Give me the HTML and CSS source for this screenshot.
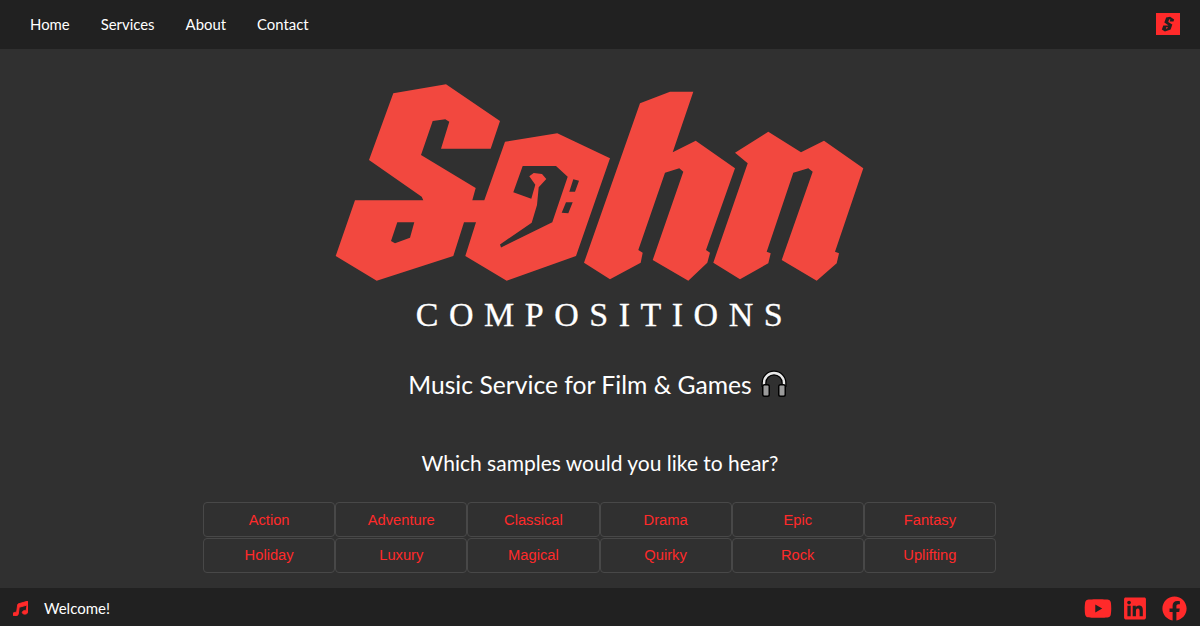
FILE: index.html
```html
<!DOCTYPE html>
<html lang="en">
<head>
    <meta charset="UTF-8">
    <meta name="viewport" content="width=device-width, initial-scale=1.0">
    <title>Sohn Compositions</title>
    <link rel="stylesheet" href="styles.css">
</head>
<body>
    <header class="topbar">
        <nav class="topnav">
            <a href="#">Home</a>
            <a href="#">Services</a>
            <a href="#">About</a>
            <a href="#">Contact</a>
        </nav>
        <svg class="brand-mark" viewBox="258 35 320 293" aria-label="Sohn">
            <rect x="258" y="35" width="320" height="293" fill="#ff2a2a"/>
            <path fill="#212121" fill-rule="evenodd" d="M393.300 93.300L446 84.300L500 121L490.700 148.700H441L449.300 121.700L445.300 119.300L432.700 121L421 155L475.700 188L453.300 256L376.700 280.700L335.700 256L355 200.300H423.300L421.700 196.700L369 160Z M397.300 222.300H414.300L410 237.700L395 243.300L391 241Z"/>
        </svg>
    </header>

    <main class="hero">
        <svg class="logo" viewBox="330 80 540 215" aria-label="Sohn logo">
            <g fill="#f2483f" fill-rule="evenodd">
                <!-- S and o, joined -->
                <path d="M393.300 93.300L446 84.300L500 121L490.700 148.700H441L449.300 121.700L445.300 119.300L432.700 121L421 155L475.700 188L472.300 200.300H484.300L505 141.700L557.300 133.300L610 158.300L576 256L506.700 280.700L465.300 256L476 222.300H464L453.300 256L376.700 280.700L335.700 256L355 200.300H423.300L421.700 196.700L369 160Z
                    M397.300 222.300H414.300L410 237.700L395 243.300L391 241Z
                    M522.700 166H556L567.700 176.700L552.300 222.300L501 247.500L500 244.500L531.700 222.700L537 205L538.700 187.300L546.300 179L542 174L533.700 173L529.300 176.300L535.300 184.700L531.300 198.700L513.300 192.300Z
                    M573.300 179.300L579 180.700L575 191.700H569.300Z
                    M566 202.300H572.700L568.300 213.300L561.700 212.700Z"/>
                <!-- h -->
                <path d="M640 103.300L670 91.700H693.300L672.700 152.300L695.700 140.700L735 168.300L706 250L710 252.700L707.300 262.700L688.300 280.700L652.700 260L683.300 171.700L679.300 168.300L665 172.700L638.300 250L642.700 252.700L640.700 262.700L610 279.300L584 262.700Z"/>
                <!-- n -->
                <path d="M735 152.700L768.300 131.700L801 152.300L824 140.700L863.300 168.300L835 251.700L839 253.300L836.700 263.300L816.700 280.700L781.700 260L812.700 171.700L808.300 168.300L793.300 172.700L766.700 251.700L770.700 253.300L768.300 263.300L740 279.300L713.300 262.700L747.700 163.300Z"/>
            </g>
        </svg>
        <p class="logo-sub">COMPOSITIONS</p>
        <h1 class="tagline">
            Music Service for Film &amp; Games
            <svg class="headphones" viewBox="0 0 28 28" aria-hidden="true">
                <path d="M4 17V13a10 10 0 0 1 20 0V17" fill="none" stroke="#000" stroke-width="5"/>
                <path d="M4 16V13a10 10 0 0 1 20 0V16" fill="none" stroke="#e8e8e8" stroke-width="2.400"/>
                <rect x="2" y="14" width="8" height="13" rx="2.500" fill="#000"/>
                <rect x="18" y="14" width="8" height="13" rx="2.500" fill="#000"/>
                <rect x="3.500" y="15.500" width="5" height="10" rx="1" fill="#9a9a9a"/>
                <rect x="19.500" y="15.500" width="5" height="10" rx="1" fill="#9a9a9a"/>
            </svg>
        </h1>
        <h2 class="question">Which samples would you like to hear?</h2>
        <div class="samples">
            <a href="#">Action</a>
            <a href="#">Adventure</a>
            <a href="#">Classical</a>
            <a href="#">Drama</a>
            <a href="#">Epic</a>
            <a href="#">Fantasy</a>
            <a href="#">Holiday</a>
            <a href="#">Luxury</a>
            <a href="#">Magical</a>
            <a href="#">Quirky</a>
            <a href="#">Rock</a>
            <a href="#">Uplifting</a>
        </div>
    </main>

    <footer class="bottombar">
        <div class="now-playing">
            <svg class="note" viewBox="0 0 512 512" aria-hidden="true">
                <path transform="translate(50 0) skewX(-8)" d="M470.380 1.510L150.410 96A32 32 0 0 0 128 126.510v261.410A139 139 0 0 0 96 384c-53 0-96 28.660-96 64s43 64 96 64 96-28.660 96-64V214.320l256-75v184.610a138.400 138.400 0 0 0-32-3.930c-53 0-96 28.660-96 64s43 64 96 64 96-28.650 96-64V32a32 32 0 0 0-41.620-30.490z"/>
            </svg>
            <span>Welcome!</span>
        </div>
        <div class="social">
            <a href="#" aria-label="YouTube">
                <svg class="icon-yt" viewBox="0 0 576 512"><path d="M549.655 124.083c-6.281-23.650-24.787-42.276-48.284-48.597C458.781 64 288 64 288 64S117.220 64 74.629 75.486c-23.497 6.322-42.003 24.947-48.284 48.597-11.412 42.867-11.412 132.305-11.412 132.305s0 89.438 11.412 132.305c6.281 23.650 24.787 41.500 48.284 47.821C117.220 448 288 448 288 448s170.780 0 213.371-11.486c23.497-6.321 42.003-24.171 48.284-47.821 11.412-42.867 11.412-132.305 11.412-132.305s0-89.438-11.412-132.305zm-317.510 213.508V175.185l142.739 81.205-142.739 81.201z"/></svg>
            </a>
            <a href="#" aria-label="LinkedIn">
                <svg class="icon-in" viewBox="0 0 448 512"><path d="M416 32H31.900C14.300 32 0 46.500 0 64.300v383.400C0 465.500 14.300 480 31.900 480H416c17.600 0 32-14.500 32-32.300V64.300c0-17.800-14.400-32.300-32-32.300zM135.400 416H69V202.200h66.500V416zm-33.200-243c-21.300 0-38.500-17.300-38.500-38.500S80.900 96 102.200 96c21.200 0 38.500 17.300 38.500 38.500 0 21.300-17.200 38.500-38.500 38.500zm282.100 243h-66.400V312c0-24.800-.5-56.700-34.500-56.700-34.600 0-39.900 27-39.900 54.900V416h-66.400V202.200h63.700v29.200h.9c8.900-16.800 30.600-34.500 62.900-34.500 67.200 0 79.700 44.300 79.700 101.900V416z"/></svg>
            </a>
            <a href="#" aria-label="Facebook">
                <svg class="icon-fb" viewBox="0 0 512 512"><path d="M504 256C504 119 393 8 256 8S8 119 8 256c0 123.780 90.690 226.380 209.250 245V327.690h-63V256h63v-54.640c0-62.150 37-96.480 93.670-96.480 27.140 0 55.520 4.840 55.520 4.840v61h-31.280c-30.800 0-40.420 19.120-40.420 38.730V256h68.780l-11 71.690h-57.780V501C413.310 482.380 504 379.780 504 256z"/></svg>
            </a>
        </div>
    </footer>
</body>
</html>
```
FILE: styles.css
```css
* {
    margin: 0;
    padding: 0;
    box-sizing: border-box;
}
body {
    height: 626px;
    overflow: hidden;
    background-color: #303030;
    color: #fff;
    font-family: 'Lato', Arial, sans-serif;
    display: flex;
    flex-direction: column;
}
a {
    text-decoration: none;
    color: inherit;
}

/* Top bar */
.topbar {
    height: 49px;
    background: #212121;
    display: flex;
    align-items: center;
    justify-content: space-between;
    padding: 0 20px 0 30px;
}
.topnav {
    display: flex;
    gap: 31px;
    font-size: 14.900px;
    line-height: 48px;
    margin-top: -1px;
}
.brand-mark {
    width: 24px;
    height: 22px;
    margin-top: -1px;
}

/* Hero */
.hero {
    flex: 1;
    display: flex;
    flex-direction: column;
    align-items: center;
}
.logo {
    width: 540px;
    height: 215px;
    margin-top: 31px;
}
.logo-sub {
    font-family: 'Liberation Serif', serif;
    font-size: 34px;
    line-height: 40px;
    letter-spacing: 10.500px;
    padding-left: 9px;
    -webkit-text-stroke: 0.300px #fff;
}
.tagline {
    display: flex;
    align-items: center;
    gap: 8px;
    height: 30px;
    margin-top: 34px;
    padding-right: 4px;
    font-size: 24.700px;
    font-weight: 400;
}
.headphones {
    width: 28px;
    height: 28px;
}
.question {
    height: 26px;
    margin-top: 51px;
    font-size: 21px;
    line-height: 26px;
    font-weight: 400;
}
.samples {
    display: grid;
    grid-template-columns: repeat(6, 132.170px);
    grid-auto-rows: 35px;
    row-gap: 1px;
    margin-top: 26px;
    margin-right: 1px;
}
.samples a {
    display: flex;
    align-items: center;
    justify-content: center;
    color: #ff2a2a;
    font-size: 14.700px;
    font-family: 'Liberation Sans', sans-serif;
    border: 1px solid #484848;
    border-radius: 4px;
}
.samples a:nth-child(n+7) {
    padding-bottom: 2px;
}

/* Bottom bar */
.bottombar {
    height: 38px;
    background: #212121;
    display: flex;
    align-items: center;
    justify-content: space-between;
    padding: 2px 13px 0;
}
.now-playing {
    display: flex;
    align-items: center;
    gap: 16px;
    font-size: 15px;
}
.note {
    width: 15px;
    height: 15px;
    fill: #ff2a2a;
    stroke: #ff2a2a;
    stroke-width: 30px;
}
.social {
    display: flex;
    align-items: center;
    gap: 12px;
}
.social a {
    display: flex;
}
.social svg {
    height: 25px;
    fill: #ff2a2a;
}
.icon-yt {
    width: 28px;
}
.icon-in {
    width: 22px;
}
.icon-fb {
    width: 25px;
    margin-left: 4px;
}
```
